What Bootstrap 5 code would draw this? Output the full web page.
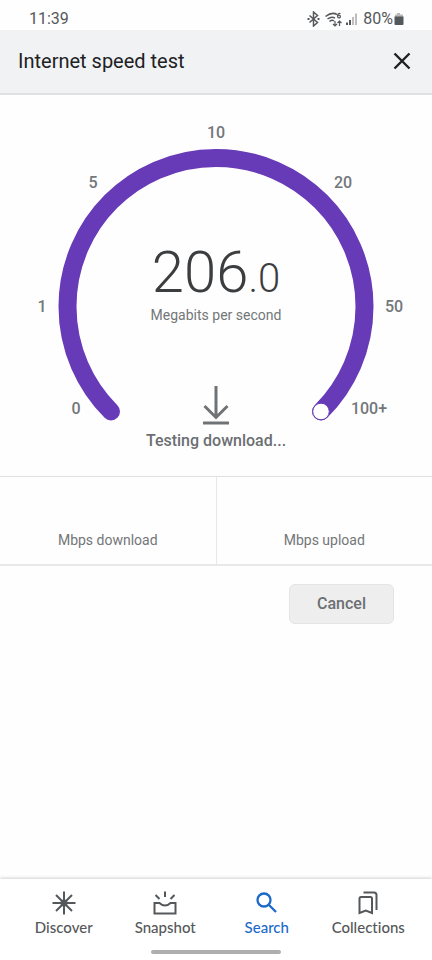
<!DOCTYPE html>
<html lang="en">
<head>
<meta charset="utf-8">
<meta name="viewport" content="width=device-width, initial-scale=1">
<title>Internet speed test</title>
<link href="https://cdn.jsdelivr.net/npm/bootstrap@5.3.0/dist/css/bootstrap.min.css" rel="stylesheet">
<style>
  body { font-family: Roboto, "Liberation Sans", sans-serif; color: #6b6f72; background: #fefefe; font-size: 14px; line-height: 20px; }
  svg { display: block; flex: none; }
  .status-bar { height: 30px; padding: 8px 28px 0 29px; font-size: 16px; color: #55585a; }
  .app-header { height: 65px; padding: 0 18px 2px; background: #f1f2f4; border-bottom: 2px solid #dfe1e4; }
  .app-title { font-size: 20px; line-height: 28px; color: #202124; }
  .close-btn { width: 24px; height: 24px; color: #202124; }
  .gauge { max-width: 432px; }
  .gauge > * { grid-area: 1 / 1; }
  .ticks { font-size: 16px; font-weight: 500; fill: #73777a; text-anchor: middle; }
  .readout { padding-top: 147px; }
  .speed { font-size: 58px; line-height: 60px; font-weight: 300; color: #3c3d3f; }
  .speed small { font-size: 40px; line-height: 40px; }
  .unit { margin-top: 3px; }
  .unit, .result { color: #737678; }
  .arrow-icon { margin-top: 60px; }
  .phase { margin-top: 6px; font-size: 16px; font-weight: 500; }
  .results { border-top: 1px solid #e0e0e1; border-bottom: 2px solid #e8e8e9; }
  .result { height: 87px; padding-bottom: 14px; }
  .result + .result { border-left: 1px solid #e8e8e9; }
  .actions { padding: 18px 38px; }
  .cancel-btn { width: 105px; height: 40px; font-size: 16px; font-weight: 500; color: #6b6f72; background: #eeeeef; border: 1px solid #e4e4e5; border-radius: 6px; }
  .bottom-nav { height: 81px; padding: 12px 13px 0; background: #fff; box-shadow: 0 -1px 3px rgba(0, 0, 0, .18); }
  .tab { color: #55585a; font-family: Lato, Roboto, sans-serif; font-size: 15px; font-weight: 500; font-variant-ligatures: none; gap: 2px; }
  .tab.active { color: #1b6ac9; }
  .home-bar { width: 130px; height: 4px; border-radius: 2px; background: #aeaeae; margin-bottom: 6px; }
</style>
</head>
<body>
<div class="d-flex flex-column min-vh-100">
  <div class="status-bar d-flex justify-content-between align-items-center">
    <span>11:39</span>
    <div class="d-flex align-items-center">
      <svg width="58" height="16" viewBox="0 0 58 16" fill="none" stroke="#55585a" stroke-width="1.5" aria-hidden="true">
        <path d="M4.500 4.500l8 7-4 3.500V1l4 3.500-8 7"/><path d="M2.500 8h2M12.500 8h2" stroke-width="2"/>
        <path d="M20.500 5.500q6.500-5 11.500-2M22.500 8q4-3 7.500-1M24.500 10.500q2.500-2 4.500-.5"/>
        <path d="M35.500 2.500q-3-.5-3 3M30 10v5m-2-2 2 2 2-2M34.500 15v-5m-2 2 2-2 2 2" stroke-width="1.200"/>
        <circle cx="34" cy="5.500" r="1.400" stroke-width="1.200"/>
        <path d="M42 11.500V14M45 9v5" stroke-width="2"/><path d="M48 6V14M51 2.500V14" stroke="#bdbdbd" stroke-width="2"/>
      </svg>
      <span>80%</span>
      <svg width="11" height="16" viewBox="0 0 11 16" aria-hidden="true">
        <path d="M4 2h3v1.500h3V6H2V3.500h2z" fill="#b9b9b9"/><path d="M1.500 5.500h9V13q0 1-1 1h-7q-1 0-1-1z" fill="#55585a"/>
      </svg>
    </div>
  </div>

  <header class="app-header d-flex justify-content-between align-items-center">
    <h1 class="app-title fw-normal m-0">Internet speed test</h1>
    <button type="button" class="close-btn btn border-0 p-0" aria-label="Close">
      <svg width="24" height="24" viewBox="0 0 24 24" fill="none" stroke="currentColor" stroke-width="2.400"><path d="M4.500 4.500l15 15M19.500 4.500l-15 15"/></svg>
    </button>
  </header>

  <main class="flex-grow-1">
    <section class="gauge d-grid w-100 mx-auto">
      <svg class="w-100" viewBox="0 0 432 381">
        <path d="M111 316.500A148.500 148.500 0 1 1 321 316.500" fill="none" stroke="#673ab7" stroke-width="18" stroke-linecap="round"/>
        <circle cx="321" cy="316.500" r="8.300" fill="#fff" stroke="#673ab7"/>
        <g class="ticks">
          <text x="76" y="319">0</text>
          <text x="42" y="217">1</text>
          <text x="93" y="93">5</text>
          <text x="216" y="43">10</text>
          <text x="343" y="93">20</text>
          <text x="394" y="217">50</text>
          <text x="369" y="319">100+</text>
        </g>
      </svg>
      <div class="readout d-flex flex-column align-items-center">
        <div class="speed d-flex align-items-baseline">206<small>.0</small></div>
        <div class="unit">Megabits per second</div>
        <svg class="arrow-icon" width="28" height="40" viewBox="0 0 28 40" fill="none" stroke="#6f7376" stroke-width="3" aria-hidden="true"><path d="M14 1v32M2.500 21L14 32.500 25.500 21M1 38h26"/></svg>
        <div class="phase">Testing download...</div>
      </div>
    </section>

    <section class="results row g-0 text-center">
      <div class="result col d-flex align-items-end justify-content-center">Mbps download</div>
      <div class="result col d-flex align-items-end justify-content-center">Mbps upload</div>
    </section>

    <div class="actions d-flex justify-content-end">
      <button type="button" class="cancel-btn btn p-0">Cancel</button>
    </div>
  </main>

  <footer class="bottom-nav d-flex flex-column justify-content-between sticky-bottom">
    <nav class="row g-0 text-center">
      <a href="#" class="tab col d-flex flex-column align-items-center text-decoration-none">
        <svg width="24" height="24" viewBox="0 0 24 24" fill="none" stroke="currentColor" stroke-width="2"><path d="M12 .5v23M.5 12h23M4 4l16 16M20 4L4 20"/><circle cx="12" cy="12" r="2.500" fill="currentColor"/></svg>
        Discover
      </a>
      <a href="#" class="tab col d-flex flex-column align-items-center text-decoration-none">
        <svg width="24" height="24" viewBox="0 0 24 24" fill="none" stroke="currentColor" stroke-width="2"><path d="M12 .5v5.500M2.500 4l4 4M21.500 4l-4 4M1.500 12h5q2.500 2.500 5.500 2.500t5.500-2.500h5V22.500h-21z"/></svg>
        Snapshot
      </a>
      <a href="#" class="tab active col d-flex flex-column align-items-center text-decoration-none" aria-current="page">
        <svg width="24" height="24" viewBox="0 0 24 24" fill="none" stroke="currentColor" stroke-width="2.300"><circle cx="9" cy="9" r="6.500"/><path d="M13.500 13.500l7.500 7.500"/></svg>
        Search
      </a>
      <a href="#" class="tab col d-flex flex-column align-items-center text-decoration-none">
        <svg width="24" height="24" viewBox="0 0 24 24" fill="none" stroke="currentColor" stroke-width="2"><path d="M3.500 7.500Q3.500 6 5 6h9.500Q16 6 16 7.500V22l-6.200-2.500L3.500 22zM7.500 1.500H18Q20.500 1.500 20.500 4v15"/></svg>
        Collections
      </a>
    </nav>
    <div class="home-bar mx-auto"></div>
  </footer>
</div>
<script src="https://cdn.jsdelivr.net/npm/bootstrap@5.3.0/dist/js/bootstrap.bundle.min.js"></script>
</body>
</html>
